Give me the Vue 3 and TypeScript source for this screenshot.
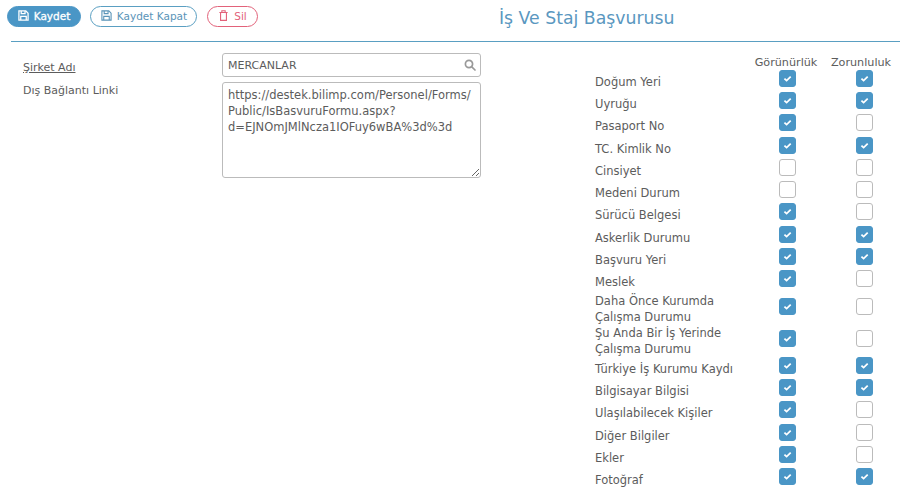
<script setup lang="ts">
interface Row {
  label: string
  visible: boolean
  required: boolean
  tall?: boolean
}

const rows: Row[] = [
  { label: 'Doğum Yeri', visible: true, required: true },
  { label: 'Uyruğu', visible: true, required: true },
  { label: 'Pasaport No', visible: true, required: false },
  { label: 'TC. Kimlik No', visible: true, required: true },
  { label: 'Cinsiyet', visible: false, required: false },
  { label: 'Medeni Durum', visible: false, required: false },
  { label: 'Sürücü Belgesi', visible: true, required: false },
  { label: 'Askerlik Durumu', visible: true, required: true },
  { label: 'Başvuru Yeri', visible: true, required: true },
  { label: 'Meslek', visible: true, required: false },
  { label: 'Daha Önce Kurumda Çalışma Durumu', visible: true, required: false, tall: true },
  { label: 'Şu Anda Bir İş Yerinde Çalışma Durumu', visible: true, required: false, tall: true },
  { label: 'Türkiye İş Kurumu Kaydı', visible: true, required: true },
  { label: 'Bilgisayar Bilgisi', visible: true, required: true },
  { label: 'Ulaşılabilecek Kişiler', visible: true, required: false },
  { label: 'Diğer Bilgiler', visible: true, required: false },
  { label: 'Ekler', visible: true, required: false },
  { label: 'Fotoğraf', visible: true, required: true },
]

const link = 'https://destek.bilimp.com/Personel/Forms/\nPublic/IsBasvuruFormu.aspx?\nd=EJNOmJMlNcza1IOFuy6wBA%3d%3d'
</script>

<template>
  <div class="page">
    <header class="toolbar">
      <div class="buttons">
        <button class="btn primary">
          <svg class="ico" viewBox="0 0 12 12" fill="none" stroke="currentColor" stroke-width="1.4"><path d="M1 1h7.5l2.5 2.5v7.5h-10z" /><path d="M3.5 1.2v2.8h4.2v-2.8M3 11v-4h6v4" /></svg>
          Kaydet
        </button>
        <button class="btn outline">
          <svg class="ico" viewBox="0 0 12 12" fill="none" stroke="currentColor" stroke-width="1.2"><path d="M1 1h7.5l2.5 2.5v7.5h-10z" /><path d="M3.5 1.2v2.8h4.2v-2.8M3 11v-4h6v4" /></svg>
          Kaydet Kapat
        </button>
        <button class="btn danger">
          <svg class="ico" viewBox="0 0 12 12" fill="none" stroke="currentColor" stroke-width="1.2"><path d="M1.5 2.8h9M4.2 2.6v-1.8h3.6v1.8M2.8 3v8.3h6.4v-8.3" /></svg>
          Sil
        </button>
      </div>
      <h1 class="title">İş Ve Staj Başvurusu</h1>
    </header>

    <main class="content">
      <section class="form">
        <div class="field first">
          <label class="label"><u>Şirket Adı</u></label>
          <div class="search">
            <input class="input" value="MERCANLAR" />
            <svg class="search-ico" viewBox="0 0 12 12" fill="none" stroke="#999" stroke-width="1.7"><circle cx="5" cy="5" r="3.6" /><path d="M7.8 7.8l3.2 3.2" stroke-linecap="round" /></svg>
          </div>
        </div>
        <div class="field">
          <label class="label second">Dış Bağlantı Linki</label>
          <textarea class="area" :value="link"></textarea>
        </div>
      </section>

      <section class="options">
        <div class="row head">
          <span class="name"></span>
          <span class="cell first-head">Görünürlük</span>
          <span class="cell second-head">Zorunluluk</span>
        </div>
        <div v-for="row in rows" :key="row.label" class="row" :class="{ tall: row.tall }">
          <span class="name">{{ row.label }}</span>
          <span class="cell">
            <span class="check" :class="{ on: row.visible }">
              <svg v-if="row.visible" viewBox="0 0 17 17"><path d="M5 8.6l2.5 2.3 4.6-4.4" fill="none" stroke="#fff" stroke-width="2" /></svg>
            </span>
          </span>
          <span class="cell">
            <span class="check" :class="{ on: row.required }">
              <svg v-if="row.required" viewBox="0 0 17 17"><path d="M5 8.6l2.5 2.3 4.6-4.4" fill="none" stroke="#fff" stroke-width="2" /></svg>
            </span>
          </span>
        </div>
      </section>
    </main>
  </div>
</template>

<style>
html,
body {
  margin: 0;
  background: #fff;
}
</style>

<style scoped>
.page {
  width: 902px;
  height: 493px;
  overflow: hidden;
  font-family: "DejaVu Sans", Verdana, sans-serif;
  font-size: 11px;
  color: #5c5c5c;
}

.toolbar {
  display: flex;
  align-items: center;
  height: 41px;
  margin: 0 2px 0 11px;
  border-bottom: 1px solid #5a9fc2;
}

.buttons {
  display: flex;
  gap: 9px;
  margin: -9px 0 0 -4px;
}

.btn {
  display: flex;
  align-items: center;
  justify-content: center;
  gap: 5px;
  height: 21px;
  padding: 0;
  border: 1px solid;
  border-radius: 11px;
  background: #fff;
  font: inherit;
  font-size: 10.5px;
}

.btn.primary {
  width: 74px;
  background: #4a96c6;
  border-color: #4a96c6;
  color: #fff;
  -webkit-text-stroke: 0.3px #fff;
}

.btn.outline {
  width: 107px;
  padding-left: 1px;
  border-color: #5a9fc2;
  color: #5a94b8;
}

.btn.danger {
  width: 51px;
  margin-left: 1px;
  border-color: #e2627a;
  color: #e2627a;
}

.ico {
  width: 11px;
  height: 11px;
  margin-top: -2px;
}

.title {
  margin: -6px 0 0 241px;
  font-size: 17.3px;
  font-weight: 400;
  color: #5a97c0;
  white-space: nowrap;
}

.content {
  display: flex;
  padding-left: 23px;
}

.form {
  width: 458px;
  flex: none;
}

.field {
  display: flex;
  margin-top: 5px;
}

.field.first {
  margin-top: 11px;
}

.label {
  width: 199px;
  flex: none;
  padding-top: 8px;
}

.label.second {
  padding-top: 2px;
}

.search {
  position: relative;
  width: 259px;
}

.input,
.area {
  display: block;
  width: 100%;
  box-sizing: border-box;
  border: 1px solid #bbb;
  border-radius: 3px;
  padding: 0 5px;
  font: inherit;
  color: #5c5c5c;
  background: #fff;
  outline: none;
}

.input {
  height: 24px;
}

.area {
  width: 259px;
  height: 96px;
  padding: 4px 5px;
  font-size: 11.5px;
  line-height: 16px;
  resize: both;
  overflow: hidden;
  white-space: pre;
}

.search-ico {
  position: absolute;
  right: 5px;
  top: 6px;
  width: 12px;
  height: 12px;
}

.options {
  margin-left: 114px;
  margin-top: 11px;
  font-size: 11.5px;
}

.row {
  display: grid;
  grid-template-columns: 154px 77px 77px;
  align-items: center;
  height: 22.3px;
}

.row.head {
  height: 16px;
  font-size: 11.2px;
}

.head .cell {
  padding-top: 2px;
}

.first-head {
  transform: translateX(-1px);
}

.second-head {
  transform: translateX(-3px);
}

.row.tall {
  height: 32px;
}

.name {
  padding-top: 3px;
  line-height: 16px;
}

.tall .name {
  padding-top: 1px;
  width: 130px;
}

.cell {
  display: flex;
  justify-content: center;
  white-space: nowrap;
  margin-left: -1px;
}

.check {
  width: 17px;
  height: 17px;
  margin-top: -4px;
  box-sizing: border-box;
  border: 1px solid #bbb;
  border-radius: 3px;
  background: #fff;
  display: block;
}

.check.on {
  background: #4a96c6;
  border-color: #4a96c6;
}

.check svg {
  display: block;
  width: 15px;
  height: 15px;
}
</style>
